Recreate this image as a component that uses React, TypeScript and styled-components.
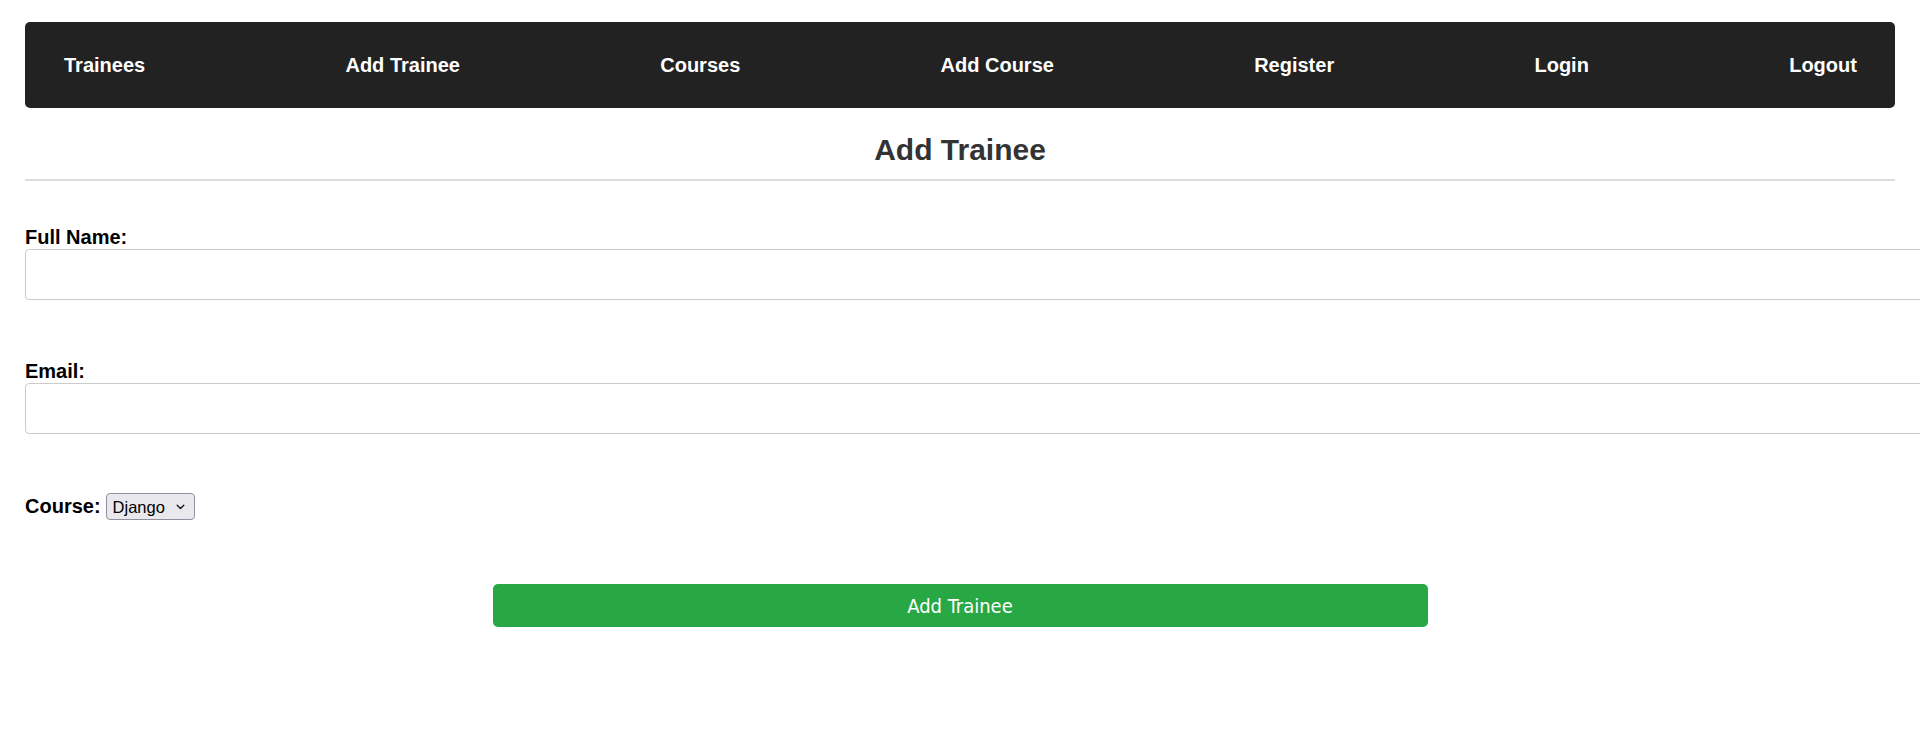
import React from "react";
import styled, { createGlobalStyle } from "styled-components";

const GlobalStyle = createGlobalStyle`
  html, body {
    margin: 0;
    padding: 0;
    background: #ffffff;
    overflow-x: hidden;
  }
  body {
    font-family: "Liberation Sans", Arial, sans-serif;
    color: #000000;
  }
  * { box-sizing: border-box; }
`;

const Page = styled.div`
  padding: 22px 25px 0;
  display: flex;
  flex-direction: column;
`;

const NavBar = styled.nav`
  height: 86px;
  background: #222222;
  border-radius: 5px;
  display: flex;
  align-items: center;
  justify-content: space-between;
  padding: 0 38px 0 39px;
`;

const NavLink = styled.a`
  color: #ffffff;
  font-family: "Liberation Sans", Arial, sans-serif;
  font-weight: 700;
  font-size: 20px;
  line-height: 23px;
  text-decoration: none;
  cursor: pointer;
`;

const Title = styled.h2`
  margin: 25px 0 0;
  padding-bottom: 12px;
  border-bottom: 2px solid #dddddd;
  text-align: center;
  font-family: "Liberation Sans", Arial, sans-serif;
  font-size: 30px;
  line-height: 34px;
  font-weight: 700;
  color: #333333;
`;

const Form = styled.form`
  display: flex;
  flex-direction: column;
  margin-top: 45px;
`;

const Field = styled.div<{ $gap?: number }>`
  display: flex;
  flex-direction: column;
  margin-top: ${(p) => p.$gap ?? 0}px;
`;

const InlineField = styled.div<{ $gap?: number }>`
  display: flex;
  align-items: center;
  gap: 5px;
  margin-top: ${(p) => p.$gap ?? 0}px;
`;

const Label = styled.label`
  display: block;
  font-family: "Liberation Sans", Arial, sans-serif;
  font-size: 20px;
  line-height: 23px;
  font-weight: 700;
  color: #000000;
`;

const TextInput = styled.input`
  display: block;
  width: calc(100% + 60px);
  height: 51px;
  margin: 0;
  padding: 0 12px;
  border: 1px solid #cccccc;
  border-radius: 4px;
  font-family: "Liberation Sans", Arial, sans-serif;
  font-size: 16px;
  background: #ffffff;
  outline: none;
`;

const SelectWrap = styled.div`
  position: relative;
  display: inline-flex;
`;

const Select = styled.select`
  appearance: none;
  -webkit-appearance: none;
  width: 89px;
  height: 27px;
  margin: 0;
  padding: 0 20px 0 6px;
  border: 1px solid #8f8f9d;
  border-radius: 4px;
  background: #e9e9ed;
  color: #000000;
  font-family: "Liberation Sans", Arial, sans-serif;
  font-size: 16.5px;
  outline: none;
`;

const Chevron = styled.svg`
  position: absolute;
  right: 10px;
  top: 11px;
  width: 9px;
  height: 6px;
  pointer-events: none;
`;

const SubmitButton = styled.button`
  align-self: center;
  width: 50%;
  height: 43px;
  margin-top: 64px;
  border: none;
  border-radius: 5px;
  background: #28a745;
  color: #ffffff;
  font-family: "DejaVu Sans Condensed", "DejaVu Sans", sans-serif;
  font-stretch: condensed;
  font-size: 20px;
  font-weight: 400;
  cursor: pointer;
`;

const links = ["Trainees", "Add Trainee", "Courses", "Add Course", "Register", "Login", "Logout"];

export default function App() {
  return (
    <>
      <GlobalStyle />
      <Page>
        <NavBar>
          {links.map((l) => (
            <NavLink key={l}>{l}</NavLink>
          ))}
        </NavBar>
        <Title>Add Trainee</Title>
        <Form onSubmit={(e) => e.preventDefault()}>
          <Field>
            <Label htmlFor="fullname">Full Name:</Label>
            <TextInput id="fullname" type="text" />
          </Field>
          <Field $gap={60}>
            <Label htmlFor="email">Email:</Label>
            <TextInput id="email" type="email" />
          </Field>
          <InlineField $gap={59}>
            <Label htmlFor="course">Course:</Label>
            <SelectWrap>
              <Select id="course" defaultValue="django">
                <option value="django">Django</option>
              </Select>
              <Chevron viewBox="0 0 9 6" fill="none">
                <path d="M1.2 1.2l3.3 3.3 3.3-3.3" stroke="#1b1b1b" strokeWidth="1.4" strokeLinecap="round" strokeLinejoin="round" />
              </Chevron>
            </SelectWrap>
          </InlineField>
          <SubmitButton type="submit">Add Trainee</SubmitButton>
        </Form>
      </Page>
    </>
  );
}
